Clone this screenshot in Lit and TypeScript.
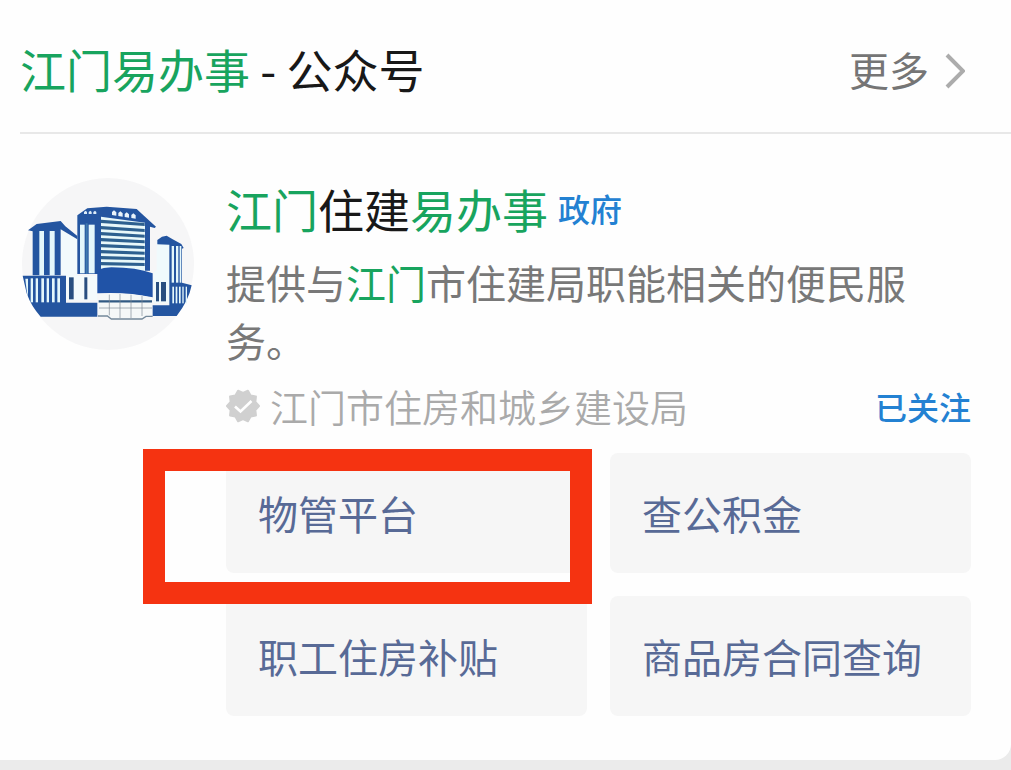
import { LitElement, html, css, svg } from "lit";
import { customElement, property } from "lit/decorators.js";

interface Part {
  text: string;
  hit?: boolean;
}

const rich = (parts: Part[]) =>
  parts.map((p) => (p.hit ? html`<em class="hit">${p.text}</em>` : p.text));

const richText = css`
  .hit {
    font-style: normal;
    color: #18a45e;
  }
`;

@customElement("account-logo")
class AccountLogo extends LitElement {
  static styles = css`
    :host {
      display: block;
    }
    .logo {
      display: block;
      width: 100%;
    }
  `;

  render() {
    const navy = "#2455a0";
    const pale = "#e4f7fb";
    const bars = (xs: number[][], y: number, h: number, fill: string) =>
      xs.map(([x, w]) => svg`<rect x=${x} y=${y} width=${w} height=${h} fill=${fill} />`);
    return html`
      <svg class="logo" viewBox="36 24 516 516" role="img" aria-label="江门住建易办事">
        <circle cx="294" cy="282" r="258" fill="#f6f6f7" />
        <!-- left tower -->
        <path d="M68 180H152L202 208V320H165V316H68Z" fill="#f2fafc" />
        <path d="M54 181L80 162L152 153L166 169L202 198V208L152 178V316H68V184Z" fill=${navy} />
        ${bars([[88, 14], [119, 15]], 183, 133, pale)}
        <!-- left annexe -->
        <path d="M38 317H168V398H262V440H92Q64 410 50 370Z" fill=${navy} />
        <path d="M46 326H54V382Q49 360 46 326Z" fill=${pale} />
        ${bars([[62, 7], [77, 7], [94, 8], [110, 7], [126, 8], [142, 8]], 325, 72, pale)}
        <rect x="168" y="318" width="94" height="72" fill="#f4fbfc" />
        ${bars([[177, 14], [223, 9]], 322, 66, "#294f80")}
        <!-- right tower -->
        <path d="M440 216L478 222V310H516V340H478V398H430V310L440 300Z" fill="#f0fafc" />
        <path d="M442 210L456 200L470 197L488 208L514 222L521 234L516 236V338L545 346Q536 392 500 438H428V406H478V224L442 223Z" fill=${navy} />
        ${bars([[485, 7], [498, 7], [509, 5]], 228, 110, pale)}
        ${bars([[487, 5], [497, 5], [507, 5], [517, 4], [527, 4]], 350, 50, pale)}
        ${bars([[438, 9], [453, 15]], 336, 58, "#294f80")}
        <!-- main tower -->
        <path d="M202 136L232 115L290 110L380 117L392 128L438 170L434 174L420 170V302H264V312H202Z" fill=${navy} />
        ${bars([[210, 14], [236, 18]], 164, 146, pale)}
        <rect x="227" y="160" width="6" height="152" fill="#407aae" />
        <path d="M273 140L405 158V304H273Z" fill="#e8f8fa" />
        ${[153, 172, 190, 208, 226, 244, 262, 280].map(
          (y, i) => svg`<path d="M273 ${y - 4}L404 ${y + 6 - i}V${y + 15 - i}L273 ${y + 6}Z" fill="#2d608f" />`
        )}
        ${[222, 236, 250].map(
          (x) => svg`<path d="M${x} 132V126L${x + 5} 122L${x + 9} 126V132Z" fill="#dcecf8" />`
        )}
        ${[306, 325, 344, 364].map(
          (x, i) => svg`<path d="M${x} ${135 + i * 3}V${126 + i * 3}L${x + 6} ${121 + i * 3}L${x + 13} ${127 + i * 3}V${137 + i * 3}Z" fill="#e9f3fa" />`
        )}
        <!-- canopy and entrance -->
        <path d="M262 300Q280 292 304 292Q380 292 428 310V382Q350 365 262 370Z" fill="#2053a7" />
        <path d="M266 372Q350 367 426 383V438H408L396 446H304L292 438H266Z" fill="#f5f8f8" />
        <path d="M266 394H426" stroke="#315a83" stroke-width="7" />
        <path d="M298 374V436M330 372V444M363 374V444M396 378V438M267 414H426" stroke="#7d8a94" stroke-width="2" fill="none" />
        <path d="M264 438H292L304 447H396L408 439H428" stroke="#74899a" stroke-width="4" fill="none" />
      </svg>
    `;
  }
}

@customElement("verified-badge")
class VerifiedBadge extends LitElement {
  static styles = css`
    :host {
      display: block;
      flex: none;
    }
    .badge {
      display: block;
      width: 34px;
      height: 34px;
    }
  `;

  render() {
    const points = Array.from({ length: 20 }, (_, i) => {
      const a = ((i * 18 - 90) * Math.PI) / 180;
      const r = i % 2 ? 16 : 13;
      return `${(17 + r * Math.cos(a)).toFixed(2)},${(17 + r * Math.sin(a)).toFixed(2)}`;
    }).join(" ");
    return html`
      <svg class="badge" viewBox="0 0 34 34" aria-hidden="true">
        <polygon points=${points} fill="#d0d0d0" stroke="#d0d0d0" stroke-width="2" stroke-linejoin="round" />
        <path d="M9 17.5L14.5 22.5L25.5 12" fill="none" stroke="#fff" stroke-width="2.6" />
      </svg>
    `;
  }
}

@customElement("service-grid")
class ServiceGrid extends LitElement {
  @property({ attribute: false }) items: string[] = [];
  @property() marked = "";

  static styles = css`
    :host {
      display: block;
    }
    .grid {
      display: grid;
      grid-template-columns: 1fr 1fr;
      gap: 23px;
    }
    .cell {
      position: relative;
      display: flex;
    }
    .tile {
      flex: 1;
      min-height: 120px;
      padding: 0 32px;
      border: 0;
      border-radius: 8px;
      background: #f6f6f6;
      color: #586a96;
      font: inherit;
      font-size: 40px;
      line-height: 60px;
      text-align: left;
      white-space: nowrap;
    }
    .marker {
      position: absolute;
      inset: -4px -5px -31px -83px;
      border: 22px solid #f53311;
      pointer-events: none;
      z-index: 1;
    }
  `;

  render() {
    return html`
      <div class="grid">
        ${this.items.map(
          (name) => html`
            <div class="cell">
              <button class="tile" type="button">${name}</button>
              ${name === this.marked ? html`<div class="marker"></div>` : null}
            </div>
          `
        )}
      </div>
    `;
  }
}

@customElement("app-root")
class AppRoot extends LitElement {
  private heading: Part[] = [{ text: "江门易办事", hit: true }, { text: " - 公众号" }];
  private account: Part[] = [
    { text: "江门", hit: true },
    { text: "住建" },
    { text: "易办事", hit: true },
  ];
  private summary: Part[] = [
    { text: "提供与" },
    { text: "江门", hit: true },
    { text: "市住建局职能相关的便民服务。" },
  ];
  private services = ["物管平台", "查公积金", "职工住房补贴", "商品房合同查询"];

  static styles = [
    richText,
    css`
      :host {
        display: block;
        min-height: 100vh;
        background: #ebebeb;
        font-family: "Noto Sans CJK SC", "Noto Sans", sans-serif;
      }
      .card {
        background: #fefefe;
        border-bottom-right-radius: 16px;
        padding-bottom: 44px;
      }
      .head {
        display: flex;
        align-items: center;
        justify-content: space-between;
        margin-left: 20px;
        padding: 35px 46px 30px 0;
        border-bottom: 2px solid #e8e8e8;
      }
      .heading {
        margin: 0;
        font-size: 46px;
        line-height: 67px;
        font-weight: 400;
        color: #181818;
      }
      .more {
        display: flex;
        align-items: center;
        gap: 16px;
        font-size: 40px;
        line-height: 60px;
        color: #757575;
        text-decoration: none;
      }
      .chevron {
        width: 20px;
        height: 36px;
        margin-top: 4px;
      }
      .account {
        display: flex;
        align-items: flex-start;
        gap: 32px;
        padding: 44px 40px 0 22px;
      }
      .logo {
        flex: none;
        width: 172px;
      }
      .body {
        flex: 1;
        min-width: 0;
      }
      .title {
        display: flex;
        align-items: center;
        gap: 10px;
      }
      .name {
        margin: 0;
        font-size: 46px;
        line-height: 60px;
        font-weight: 400;
        color: #181818;
      }
      .tag,
      .follow {
        font-size: 32px;
        line-height: 48px;
        font-weight: 500;
        color: #2381d2;
      }
      .summary {
        margin: 15px 0 13px;
        font-size: 40px;
        line-height: 58px;
        color: #787878;
      }
      .source {
        display: flex;
        align-items: center;
        gap: 10px;
        margin-bottom: 23px;
      }
      .publisher {
        flex: 1;
        font-size: 38px;
        line-height: 48px;
        font-weight: 350;
        color: #aaaaaa;
      }
      .follow {
        padding: 0;
        border: 0;
        background: none;
        font-family: inherit;
      }
    `,
  ];

  render() {
    return html`
      <main class="card">
        <header class="head">
          <h1 class="heading">${rich(this.heading)}</h1>
          <a class="more" href="#more">
            更多
            <svg class="chevron" viewBox="0 0 20 36" aria-hidden="true">
              <path d="M2 2L18 18L2 34" fill="none" stroke="#acacac" stroke-width="4" />
            </svg>
          </a>
        </header>
        <section class="account">
          <account-logo class="logo"></account-logo>
          <div class="body">
            <div class="title">
              <h2 class="name">${rich(this.account)}</h2>
              <span class="tag">政府</span>
            </div>
            <p class="summary">${rich(this.summary)}</p>
            <div class="source">
              <verified-badge></verified-badge>
              <span class="publisher">江门市住房和城乡建设局</span>
              <button class="follow" type="button">已关注</button>
            </div>
            <service-grid .items=${this.services} marked="物管平台"></service-grid>
          </div>
        </section>
      </main>
    `;
  }
}
